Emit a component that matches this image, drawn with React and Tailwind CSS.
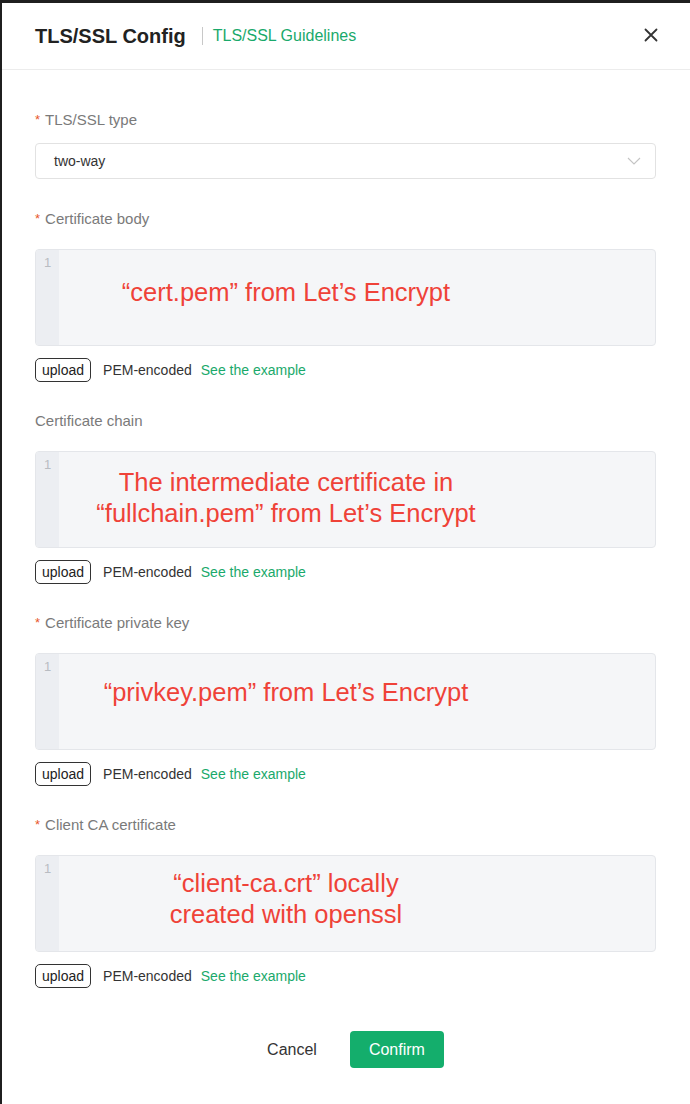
import { useState } from "react";

const sections = [
  {
    label: "Certificate body",
    required: true,
    note: ["\u201ccert.pem\u201d from Let\u2019s Encrypt"],
    top: "pt-[27px]",
  },
  {
    label: "Certificate chain",
    required: false,
    note: ["The intermediate certificate in", "\u201cfullchain.pem\u201d from Let\u2019s Encrypt"],
    top: "pt-[15px]",
  },
  {
    label: "Certificate private key",
    required: true,
    note: ["\u201cprivkey.pem\u201d from Let\u2019s Encrypt"],
    top: "pt-[23px]",
  },
  {
    label: "Client CA certificate",
    required: true,
    note: ["\u201cclient-ca.crt\u201d locally", "created with openssl"],
    top: "pt-[12px]",
  },
];

const Label = ({ required, children }) => (
  <div className="h-[22px] flex items-center text-[15px] text-[#7a7a7a]">
    {required && <span className="text-[#e8572a] mr-[5px] text-[13px]">*</span>}
    <span>{children}</span>
  </div>
);

const Editor = ({ note, top }) => (
  <div className="relative h-[97px] rounded-[4px] border border-[#e4e6ea] bg-[#f5f6f8] flex overflow-hidden">
    <div className="w-[23px] bg-[#eceef2] text-[13px] text-[#b8bcc2] text-center pt-[4px] leading-[18px]">1</div>
    <div className="flex-1" />
    <div className={`absolute left-0 top-0 w-[500px] text-center text-[25.5px] leading-[31px] text-[#ef4238] ${top}`}>
      {note.map((line) => (
        <div key={line}>{line}</div>
      ))}
    </div>
  </div>
);

const UploadRow = () => (
  <div className="flex items-center h-[24px] mt-[12px] text-[14px]">
    <button
      type="button"
      className="h-[24px] px-[6px] border border-[#333] rounded-[5px] text-[#222] leading-none"
    >
      upload
    </button>
    <span className="ml-[12px] text-[#333]">PEM-encoded</span>
    <a className="ml-[9px] text-[#1aa96b] cursor-pointer">See the example</a>
  </div>
);

export default function App() {
  const [type] = useState("two-way");

  return (
    <div
      className="min-h-screen bg-white border-t-[3px] border-l-2 border-[#1f1f1f]"
      style={{ fontFamily: '"Liberation Sans", Arial, sans-serif' }}
    >
      {/* header */}
      <div className="h-[67px] border-b border-[#ececec] flex items-center pl-[33px] pr-[32px]">
        <span className="text-[20px] font-semibold text-[#222]">TLS/SSL Config</span>
        <a className="ml-[16px] pl-[10px] border-l border-[#c8c8c8] h-[18px] flex items-center text-[16px] text-[#1aa96b]">
          TLS/SSL Guidelines
        </a>
        <button type="button" className="ml-auto -mt-[3px] text-[#333]">
          <svg width="14" height="14" viewBox="0 0 14 14" fill="none">
            <path d="M1.5 1.5L12.5 12.5M12.5 1.5L1.5 12.5" stroke="currentColor" strokeWidth="1.8" strokeLinecap="round" />
          </svg>
        </button>
      </div>

      {/* body */}
      <div className="pl-[33px] pr-[34px] pt-[39px]">
        <Label required>TLS/SSL type</Label>
        <div className="mt-[12px] h-[36px] rounded-[4px] border border-[#e2e2e2] flex items-center pl-[18px] pr-[14px] text-[14px] text-[#333]">
          <span>{type}</span>
          <svg className="ml-auto" width="14" height="8" viewBox="0 0 14 8" fill="none">
            <path d="M1 1L7 7L13 1" stroke="#c4c4c4" strokeWidth="1.1" />
          </svg>
        </div>

        {sections.map((s, i) => (
          <div key={s.label} className={i === 0 ? "mt-[29px]" : "mt-[28px]"}>
            <Label required={s.required}>{s.label}</Label>
            <div className="mt-[19px]">
              <Editor note={s.note} top={s.top} />
            </div>
            <UploadRow />
          </div>
        ))}

        <div className="mt-[43px] flex justify-center items-center gap-[17px] pl-[4px]">
          <button type="button" className="h-[37px] px-[16px] text-[16px] text-[#333]">
            Cancel
          </button>
          <button
            type="button"
            className="h-[37px] w-[94px] rounded-[4px] bg-[#14ae6c] text-white text-[16px]"
          >
            Confirm
          </button>
        </div>
      </div>
    </div>
  );
}
